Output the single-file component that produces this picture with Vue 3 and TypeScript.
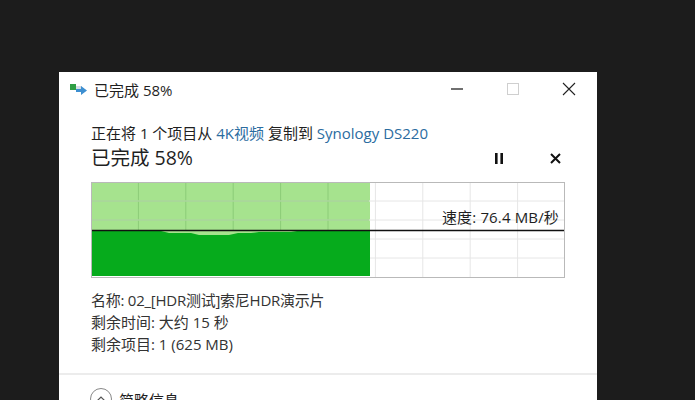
<script setup lang="ts">
const verticals = [47.4, 94.8, 142.2, 189.6, 237, 284.4, 331.8, 379.2, 426.6]
const horizontals = [19, 38, 57, 76]
const progressWidth = 278
const speedY = 48.5
</script>

<template>
  <div class="page">
    <div class="dialog">
      <header class="titlebar">
        <div class="titlebar__left">
          <svg class="app-icon" width="18" height="14" viewBox="0 0 18 14">
            <rect x="0" y="1" width="6" height="6" fill="#2f9e44" />
            <rect x="6" y="3" width="6" height="6" fill="#d5dde5" />
            <path d="M6 6h5V3l6 4.500-6 4.500V9H6z" fill="#3d8fd1" />
          </svg>
          <span>已完成 58%</span>
        </div>
        <div class="titlebar__buttons">
          <svg width="14" height="14" viewBox="0 0 14 14"><path d="M1 7h12" stroke="#222" stroke-width="1.3" /></svg>
          <svg width="14" height="14" viewBox="0 0 14 14"><rect x="1.500" y="1.500" width="11" height="11" fill="none" stroke="#cfcfcf" /></svg>
          <svg width="14" height="14" viewBox="0 0 14 14"><path d="M1 1l12 12M13 1L1 13" stroke="#222" stroke-width="1.1" /></svg>
        </div>
      </header>

      <div class="content">
        <p class="copy-line">
          正在将 1 个项目从 <span class="link">4K视频</span> 复制到 <span class="link">Synology DS220</span>
        </p>
        <div class="progress-head">
          <h1>已完成 58%</h1>
          <div class="progress-head__actions">
            <svg width="10" height="11" viewBox="0 0 10 11"><path d="M1 0h2.600v11H1zM6.400 0H9v11H6.400z" fill="#111" /></svg>
            <svg width="11" height="11" viewBox="0 0 11 11"><path d="M1 1l9 9M10 1l-9 9" stroke="#111" stroke-width="2" /></svg>
          </div>
        </div>

        <div class="chart">
          <svg class="chart__svg" width="474" height="96" viewBox="0 0 474 96">
            <rect x="0" y="0" width="474" height="96" fill="#fff" />
            <rect x="1" y="1" :width="progressWidth" height="54" fill="#a6e38e" />
            <path
              d="M1 49H70L78 51H100L108 53H138L147 51H160L168 50H200L206 49H279V94H1z"
              fill="#06ab1c"
            />
            <line
              v-for="x in verticals"
              :key="x"
              :x1="x"
              :x2="x"
              y1="1"
              :y2="x < progressWidth ? 48 : 95"
              :stroke="x < progressWidth ? '#8ccc78' : '#e6e6e6'"
            />
            <line
              v-for="y in horizontals"
              :key="y"
              :x1="y < speedY ? 1 : progressWidth + 1"
              x2="473"
              :y1="y"
              :y2="y"
              stroke="#e6e6e6"
            />
            <line
              v-for="y in horizontals.filter((h) => h < speedY)"
              :key="'g' + y"
              x1="1"
              :x2="progressWidth"
              :y1="y"
              :y2="y"
              stroke="#8ccc78"
            />
            <line x1="1" x2="473" :y1="speedY" :y2="speedY" stroke="#111" stroke-width="1.300" />
            <rect x="0.500" y="0.500" width="473" height="95" fill="none" stroke="#b9b9b9" />
          </svg>
          <span class="chart__speed">速度: 76.4 MB/秒</span>
        </div>

        <ul class="details">
          <li class="details__name">名称: 02_[HDR测试]索尼HDR演示片</li>
          <li>剩余时间: 大约 15 秒</li>
          <li>剩余项目: 1 (625 MB)</li>
        </ul>
      </div>

      <footer class="footer">
        <span class="footer__toggle">
          <svg width="14" height="10" viewBox="0 0 14 10"><path d="M2 8l5-5 5 5" fill="none" stroke="#555" stroke-width="1.200" /></svg>
        </span>
        <span>简略信息</span>
      </footer>
    </div>
  </div>
</template>

<style scoped>
.page {
  width: 695px;
  height: 400px;
  box-sizing: border-box;
  overflow: hidden;
  padding: 72px 98px 0 59px;
  background: #1c1c1c;
  font-family: "Open Sans", "Noto Sans CJK SC", sans-serif;
  color: #1f1f1f;
}

.dialog {
  background: #fff;
  height: 360px;
}

.titlebar {
  display: flex;
  align-items: center;
  justify-content: space-between;
  height: 34px;
  padding: 0 21px 0 11px;
  font-size: 15px;
}

.titlebar__left {
  display: flex;
  align-items: center;
  gap: 6px;
}

.app-icon {
  margin-top: 2px;
}

.titlebar__buttons {
  display: flex;
  gap: 42px;
  margin-top: 0;
}

.content {
  padding: 16px 32px 0;
}

.copy-line {
  margin: 0;
  font-size: 15px;
  line-height: 22px;
  white-space: nowrap;
}

.link {
  color: #2b6c9f;
}

.progress-head {
  display: flex;
  align-items: center;
  justify-content: space-between;
  height: 28px;
  margin-bottom: 10px;
}

.progress-head h1 {
  margin: 0;
  font-size: 19.500px;
  font-weight: 400;
  line-height: 28px;
}

.progress-head__actions {
  display: flex;
  align-items: center;
  gap: 46px;
  padding-right: 4px;
}

.chart {
  position: relative;
  width: 474px;
  height: 96px;
}

.chart__svg {
  display: block;
}

.chart__speed {
  position: absolute;
  right: 6px;
  top: 25px;
  font-size: 15px;
  line-height: 20px;
  letter-spacing: 0.15px;
  white-space: nowrap;
}

.details {
  list-style: none;
  margin: 11px 0 0;
  padding: 0;
  font-size: 15px;
  line-height: 22px;
  color: #333;
  white-space: nowrap;
}

.details__name {
  letter-spacing: -0.25px;
}

.footer {
  display: flex;
  align-items: center;
  gap: 7px;
  margin-top: 18px;
  padding: 13px 31px 0;
  border-top: 2px solid #ececec;
  font-size: 15px;
}

.footer__toggle {
  display: flex;
  align-items: center;
  justify-content: center;
  width: 20px;
  height: 20px;
  border: 1px solid #888;
  border-radius: 50%;
}
</style>

<style>
html,
body {
  background: #1c1c1c;
  overflow: hidden;
}
</style>
